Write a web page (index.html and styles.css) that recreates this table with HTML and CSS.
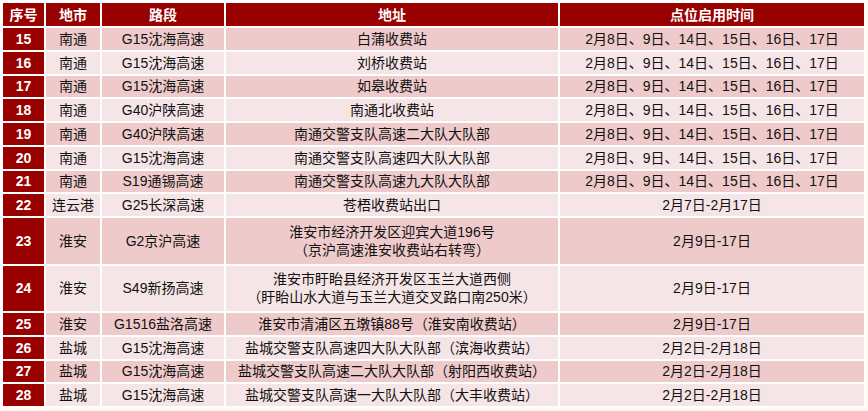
FILE: index.html
```html
<!DOCTYPE html>
<html lang="zh-CN">
<head>
<meta charset="utf-8">
<title>点位启用时间</title>
<link rel="stylesheet" href="styles.css">
</head>
<body>
<table class="sched">
  <colgroup>
    <col class="c-no"><col class="c-city"><col class="c-road"><col class="c-addr"><col class="c-time">
  </colgroup>
  <thead>
    <tr><th>序号</th><th>地市</th><th>路段</th><th>地址</th><th>点位启用时间</th></tr>
  </thead>
  <tbody>
    <tr class="dark"><td class="no">15</td><td>南通</td><td>G15沈海高速</td><td>白蒲收费站</td><td>2月8日、9日、14日、15日、16日、17日</td></tr>
    <tr class="light"><td class="no">16</td><td>南通</td><td>G15沈海高速</td><td>刘桥收费站</td><td>2月8日、9日、14日、15日、16日、17日</td></tr>
    <tr class="dark"><td class="no">17</td><td>南通</td><td>G15沈海高速</td><td>如皋收费站</td><td>2月8日、9日、14日、15日、16日、17日</td></tr>
    <tr class="light"><td class="no">18</td><td>南通</td><td>G40沪陕高速</td><td>南通北收费站</td><td>2月8日、9日、14日、15日、16日、17日</td></tr>
    <tr class="dark"><td class="no">19</td><td>南通</td><td>G40沪陕高速</td><td>南通交警支队高速二大队大队部</td><td>2月8日、9日、14日、15日、16日、17日</td></tr>
    <tr class="light"><td class="no">20</td><td>南通</td><td>G15沈海高速</td><td>南通交警支队高速四大队大队部</td><td>2月8日、9日、14日、15日、16日、17日</td></tr>
    <tr class="dark"><td class="no">21</td><td>南通</td><td>S19通锡高速</td><td>南通交警支队高速九大队大队部</td><td>2月8日、9日、14日、15日、16日、17日</td></tr>
    <tr class="light"><td class="no">22</td><td>连云港</td><td>G25长深高速</td><td>苍梧收费站出口</td><td>2月7日-2月17日</td></tr>
    <tr class="dark tall"><td class="no">23</td><td>淮安</td><td>G2京沪高速</td><td>淮安市经济开发区迎宾大道196号<br>（京沪高速淮安收费站右转弯）</td><td>2月9日-17日</td></tr>
    <tr class="light tall"><td class="no">24</td><td>淮安</td><td>S49新扬高速</td><td>淮安市盱眙县经济开发区玉兰大道西侧<br>（盱眙山水大道与玉兰大道交叉路口南250米）</td><td>2月9日-17日</td></tr>
    <tr class="dark"><td class="no">25</td><td>淮安</td><td>G1516盐洛高速</td><td>淮安市清浦区五墩镇88号（淮安南收费站）</td><td>2月9日-17日</td></tr>
    <tr class="light"><td class="no">26</td><td>盐城</td><td>G15沈海高速</td><td>盐城交警支队高速四大队大队部（滨海收费站）</td><td>2月2日-2月18日</td></tr>
    <tr class="dark"><td class="no">27</td><td>盐城</td><td>G15沈海高速</td><td>盐城交警支队高速二大队大队部（射阳西收费站）</td><td>2月2日-2月18日</td></tr>
    <tr class="light"><td class="no">28</td><td>盐城</td><td>G15沈海高速</td><td>盐城交警支队高速一大队大队部（大丰收费站）</td><td>2月2日-2月18日</td></tr>
  </tbody>
</table>
</body>
</html>
```
FILE: styles.css
```css
html, body {
  margin: 0;
  padding: 0;
}
body {
  background: #fdf8e7;
  font-family: "Liberation Sans", Arial, "Noto Sans CJK SC", sans-serif;
  font-size: 14px;
  color: #111111;
}
.sched {
  background: #ffffff;
  border-collapse: separate;
  border-spacing: 2px;
  padding: 1px;
  table-layout: fixed;
  width: 867px;
}
.c-no { width: 41px; }
.c-city { width: 54px; }
.c-road { width: 122px; }
.c-addr { width: 332px; }
.c-time { width: 304px; }
.sched th {
  background: #990000;
  color: #ffffff;
  font-weight: bold;
  height: 23px;
  padding: 0;
  line-height: 18px;
  text-align: center;
}
.sched td {
  padding: 0;
  height: 21.75px;
  line-height: 18px;
  text-align: center;
  white-space: nowrap;
}
.sched tr.tall td {
  height: 45.5px;
}
.sched tr.dark td {
  background: #eecacb;
}
.sched tr.light td {
  background: #f6e5e6;
}
.sched tr td.no {
  background: #990000;
  color: #ffffff;
  font-weight: bold;
}
```
